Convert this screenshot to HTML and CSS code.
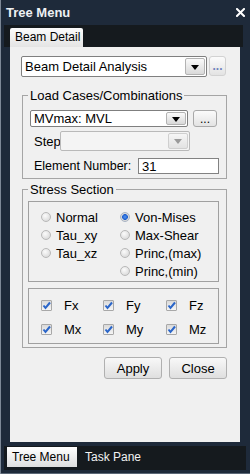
FILE: index.html
```html
<!DOCTYPE html>
<html lang="en">
<head>
  <meta charset="UTF-8">
  <title>Tree Menu</title>
  <link rel="stylesheet" href="styles.css">
</head>
<body>
  <div class="window">
    <div class="titlebar">
      <span class="title">Tree Menu</span>
      <svg class="close" width="9" height="9" viewBox="0 0 9 9">
        <path d="M1 1 L8 8 M8 1 L1 8" stroke="#ffffff" stroke-width="2" stroke-linecap="square"/>
      </svg>
    </div>

    <div class="tabstrip top">
      <div class="tab">Beam Detail</div>
    </div>

    <div class="panel">
      <div class="row-top">
        <div class="combo wide">
          <span class="value">Beam Detail Analysis</span>
          <span class="arrow"></span>
        </div>
        <button class="dots faint">...</button>
      </div>

      <fieldset class="group loads">
        <legend>Load Cases/Combinations</legend>
        <div class="row">
          <div class="combo lc">
            <span class="value">MVmax: MVL</span>
            <span class="arrow"></span>
          </div>
          <button class="dots">...</button>
        </div>
        <div class="row step">
          <label>Step</label>
          <div class="combo disabled">
            <span class="value"></span>
            <span class="arrow"></span>
          </div>
        </div>
        <div class="row elem">
          <label>Element Number:</label>
          <input type="text" value="31">
        </div>
      </fieldset>

      <fieldset class="group stress">
        <legend>Stress Section</legend>
        <div class="box radios">
          <div class="opt"><span class="radio"></span>Normal</div>
          <div class="opt"><span class="radio on"></span>Von-Mises</div>
          <div class="opt"><span class="radio"></span>Tau_xy</div>
          <div class="opt"><span class="radio"></span>Max-Shear</div>
          <div class="opt"><span class="radio"></span>Tau_xz</div>
          <div class="opt"><span class="radio"></span>Princ,(max)</div>
          <div class="opt"></div>
          <div class="opt"><span class="radio"></span>Princ,(min)</div>
        </div>
        <div class="box checks">
          <div class="chk"><span class="cb"><svg width="9" height="9" viewBox="0 0 9 9"><path d="M1.5 4.5 L3.5 7 L8 1.5" fill="none" stroke="#2b66c9" stroke-width="2"/></svg></span>Fx</div>
          <div class="chk"><span class="cb"><svg width="9" height="9" viewBox="0 0 9 9"><path d="M1.5 4.5 L3.5 7 L8 1.5" fill="none" stroke="#2b66c9" stroke-width="2"/></svg></span>Fy</div>
          <div class="chk"><span class="cb"><svg width="9" height="9" viewBox="0 0 9 9"><path d="M1.5 4.5 L3.5 7 L8 1.5" fill="none" stroke="#2b66c9" stroke-width="2"/></svg></span>Fz</div>
          <div class="chk"><span class="cb"><svg width="9" height="9" viewBox="0 0 9 9"><path d="M1.5 4.5 L3.5 7 L8 1.5" fill="none" stroke="#2b66c9" stroke-width="2"/></svg></span>Mx</div>
          <div class="chk"><span class="cb"><svg width="9" height="9" viewBox="0 0 9 9"><path d="M1.5 4.5 L3.5 7 L8 1.5" fill="none" stroke="#2b66c9" stroke-width="2"/></svg></span>My</div>
          <div class="chk"><span class="cb"><svg width="9" height="9" viewBox="0 0 9 9"><path d="M1.5 4.5 L3.5 7 L8 1.5" fill="none" stroke="#2b66c9" stroke-width="2"/></svg></span>Mz</div>
        </div>
      </fieldset>

      <div class="actions">
        <button class="btn">Apply</button>
        <button class="btn">Close</button>
      </div>
    </div>

    <div class="tabstrip bottom">
      <div class="tab">Tree Menu</div>
      <div class="tab plain">Task Pane</div>
    </div>
  </div>
</body>
</html>
```

FILE: styles.css
```css
body {
  margin: 0;
  background: #1e2a3a;
  font-family: "Liberation Sans", Arial, sans-serif;
  color: #000;
}

.window {
  width: 250px;
  height: 474px;
  background: #1e2a3a;
  box-shadow: inset 1px 0 0 #7d8896, inset 0 -1px 0 #5b6776;
  display: flex;
  flex-direction: column;
  overflow: hidden;
}

.titlebar {
  height: 25px;
  display: flex;
  align-items: center;
  justify-content: space-between;
  padding: 0 5px 0 6px;
}

.title {
  color: #eef0f3;
  font-weight: bold;
  font-size: 13px;
}

.close {
  display: block;
  margin-top: -1px;
}

.tabstrip {
  background: #151a1e;
  box-sizing: border-box;
  display: flex;
}

.tabstrip.top {
  margin: 0 7px 0 4px;
  height: 22px;
  padding: 3px 0 0 6px;
}

.tab {
  font-size: 12px;
  box-sizing: border-box;
  background: linear-gradient(#fdfdfd, #dadada);
  color: #000;
}

.top .tab {
  width: 73px;
  height: 19px;
  line-height: 19px;
  padding-left: 5px;
  border-radius: 2px 2px 0 0;
  background: linear-gradient(#fbfbfb, #e4e4e4);
}

.panel {
  margin-left: 10px;
  width: 230px;
  height: 395px;
  background: #f0f0f0;
  box-sizing: border-box;
  padding-top: 9px;
}

.row-top {
  display: flex;
  margin-left: 11px;
}

.combo {
  display: flex;
  box-sizing: border-box;
  background: #fff;
  border: 1px solid #7f7f7f;
  border-radius: 2px;
  font-size: 13px;
}

.combo .value {
  flex: 1;
  padding-left: 3px;
  white-space: nowrap;
}

.combo .arrow {
  width: 18px;
  margin: 1px;
  border: 1px solid #b3b3b3;
  border-radius: 2px;
  background: linear-gradient(#fafafa, #d9d9d9);
  display: flex;
  align-items: center;
  justify-content: center;
}

.combo .arrow::after {
  content: "";
  border-left: 4px solid transparent;
  border-right: 4px solid transparent;
  border-top: 5px solid #000;
  margin-top: 1px;
}

.combo.wide {
  width: 186px;
  height: 21px;
  line-height: 19px;
}

.dots {
  box-sizing: border-box;
  border: 1px solid #a9a9a9;
  border-radius: 3px;
  background: linear-gradient(#fbfbfb, #e3e3e3);
  font-family: "Liberation Sans", Arial, sans-serif;
  font-size: 12px;
  padding: 0;
  line-height: 12px;
  color: #000;
}

.dots.faint {
  width: 17px;
  height: 20px;
  margin-left: 2px;
  border-color: #d2d2d2;
  color: #6f82bd;
  font-weight: bold;
}

.group {
  border: 1px solid #a5a5a5;
  min-width: 0;
}

.group legend {
  font-size: 13px;
  line-height: 15px;
  padding: 0 2px;
}

.group.loads {
  margin: 11px 13px 0 12px;
  padding: 7px 7px 4px 7px;
}

.group.loads legend {
  margin-left: -2px;
}

.row {
  display: flex;
  align-items: center;
  font-size: 13px;
}

.combo.lc {
  width: 158px;
  height: 17px;
  line-height: 15px;
}

.row .dots {
  width: 24px;
  height: 17px;
  margin-left: 5px;
}

.row label {
  padding-left: 4px;
}

.row.step {
  margin-top: 4px;
}

.row.step label {
  width: 26px;
}

.combo.disabled {
  width: 130px;
  height: 20px;
  background: #f4f4f4;
  border-color: #b9b9b9;
}

.combo.disabled .arrow {
  border-color: #cfcfcf;
  background: linear-gradient(#f6f6f6, #e2e2e2);
}

.combo.disabled .arrow::after {
  border-top-color: #9a9a9a;
}

.row.elem {
  margin-top: 7px;
}

.row.elem label {
  font-size: 12.5px;
  width: 104px;
}

.row.elem input {
  width: 81px;
  height: 16px;
  box-sizing: border-box;
  border: 1px solid #828282;
  font-family: "Liberation Sans", Arial, sans-serif;
  font-size: 13px;
  padding: 0 0 0 3px;
  margin: 0;
}

.group.stress {
  margin: 3px 13px 0 12px;
  padding: 4px 7px 3px 5px;
}

.box {
  border: 1px solid #a0a0a0;
  box-sizing: border-box;
  display: grid;
  font-size: 13px;
}

.radios {
  height: 81px;
  padding: 6px 0 0 12px;
  grid-template-columns: 79px auto;
  grid-auto-rows: 18px;
}

.opt {
  display: flex;
  align-items: center;
  gap: 5px;
}

.radio {
  width: 10px;
  height: 10px;
  box-sizing: border-box;
  border-radius: 50%;
  border: 1px solid #b8b8b8;
  background: radial-gradient(circle at 40% 35%, #fbfbfb, #d2d2d2);
}

.radio.on {
  border-color: #a9b4c4;
  background: radial-gradient(circle, #4f92ee 0, #1f5fcf 2.6px, #dcdcdc 3.2px, #cfcfcf 100%);
}

.checks {
  margin-top: 6px;
  height: 56px;
  padding: 4px 0 0 12px;
  grid-template-columns: 62px 63px auto;
  grid-auto-rows: 24px;
}

.chk {
  display: flex;
  align-items: center;
  gap: 12px;
}

.cb {
  width: 11px;
  height: 11px;
  box-sizing: border-box;
  border: 1px solid #a8a8a8;
  border-radius: 1px;
  background: linear-gradient(#dadada, #f5f5f5);
  display: flex;
  align-items: center;
  justify-content: center;
}

.cb svg {
  display: block;
}

.actions {
  display: flex;
  justify-content: flex-end;
  gap: 7px;
  margin: 9px 13px 0 0;
}

.btn {
  width: 58px;
  height: 22px;
  box-sizing: border-box;
  border: 1px solid #b0b0b0;
  border-radius: 3px;
  background: linear-gradient(#f8f8f8, #dfdfdf);
  font-family: "Liberation Sans", Arial, sans-serif;
  font-size: 13px;
  color: #000;
  padding: 0;
}

.tabstrip.bottom {
  margin: 4px 4px 0 4px;
  height: 24px;
  padding: 1px 0 0 3px;
  align-items: flex-start;
}

.bottom .tab {
  width: 70px;
  height: 20px;
  line-height: 20px;
  padding-left: 5px;
  background: linear-gradient(#ffffff, #dedede);
}

.bottom .tab.plain {
  background: none;
  color: #f2f2f2;
  width: auto;
  padding-left: 8px;
}
```
